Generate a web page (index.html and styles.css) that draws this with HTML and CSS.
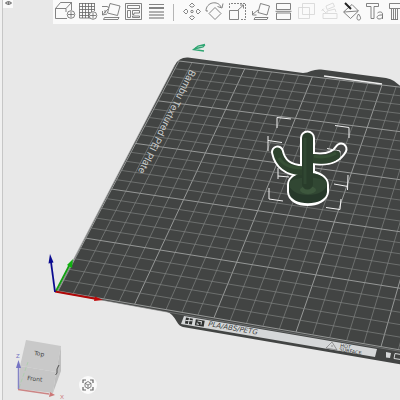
FILE: index.html
```html
<!DOCTYPE html>
<html lang="en">
<head>
    <meta charset="utf-8">
    <title>Prepare</title>
    <link rel="stylesheet" href="styles.css">
</head>
<body>
    <div class="app">
        <!-- edge of the settings panel -->
        <aside class="sidebar"></aside>

        <main class="viewport">
            <svg class="scene" viewBox="3 0 397 400" preserveAspectRatio="xMinYMin slice">
                <!-- build plate -->
                <path class="plate" d="M57 292 L175 65 Q179 57 188 57.500 L303 73 Q307 73 311 71 Q316 69 321 69.500 L386 78 Q391 79 394 81 L404 89 V365 L183 327 Q179 326 177 322 Q172 313 167 312 Z"/>
                <g id="grid"></g>
                <path class="plate-edge" d="M58 292 L167 312 L404 352 M57 291 L175 65"/>
                <path class="slot" d="M324 76 L382 84"/>

                <text class="plate-name" transform="translate(190 69) rotate(117)">Bambu Textured PEI Plate</text>

                <!-- plate label -->
                <path class="label" d="M184 316 L377 349 L375 357 L181 324 Z"/>
                <g transform="translate(186 317.500) rotate(10)">
                    <rect class="dark" width="7" height="6"/>
                    <path class="light-line" d="M3.500 0 V6 M0 3 L7 2"/>
                    <rect class="dark" x="10" y="0" width="9" height="6"/>
                    <path class="light-line" d="M12 1.500 H16 V4.500 M12 3 V4.500 H14"/>
                </g>
                <text class="label-text" transform="translate(208 326) rotate(10)">PLA/ABS/PETG</text>
                <path class="warning" d="M326 348 L332 342 L337 350 Z M332 345 V347"/>
                <text class="label-small" transform="translate(340 347) rotate(10)">HOT</text>
                <text class="label-small" transform="translate(339 351) rotate(10)">SURFACE</text>
                <path class="bin" d="M386 352 L391 353 L390 358 L386 357.500 Z"/>
                <path class="bin-line" d="M404 355 L395 353.500 L394 358.500 L404 360"/>

                <path class="mark" d="M205 44.500 L198 46 L193.500 49.500 L204 51 M205 44.500 L203 47 L194 49"/>

                <!-- selection box -->
                <path class="corners" d="M291 119 L277 117.500 V128 M335 125.500 L349 127.500 V138 M268 136 V151 M268 140.500 L282 142.500 M278 168 V179 M278 176 L289 177 M269 188 V199 L283 201 M326 207.500 L340 209.500 L341 199 M334 184 L348 186.500 M348 175 L347.500 190"/>

                <!-- cactus -->
                <g class="outline">
                    <path d="M277.500 152 C280 164 288 170 303 171 M313 158.500 C326 160 336 158 341 149"/>
                    <path class="trunk" d="M307.500 138 V187"/>
                    <path class="pot" d="M289 185 C290 168 326 168 327 185 V192 C325 208 290 208 289 192 Z"/>
                </g>
                <path class="arm-gap" d="M313 158.500 C326 160 336 158 341 149"/>
                <path class="corners" d="M327 148.500 L340 151 V160"/>
                <path class="pot-side" d="M289 184 V192 C290 207 326 207 327 192 V184 Z"/>
                <ellipse class="pot-top" cx="308" cy="184" rx="19" ry="11"/>
                <path class="pot-inner" d="M290 182 C292 170 324 170 326 182 C322 176 294 176 290 182 Z"/>
                <ellipse class="pot-shine" cx="308" cy="190" rx="8" ry="4"/>
                <path class="arm" d="M277.500 152 C280 164 288 170 303 171"/>
                <path class="arm" d="M313 158.500 C322 160 331 159 336 155"/>
                <path class="arm-light" d="M279 158 C283 165 290 168 302 168 M314 156 C323 158 331 156 336 153"/>
                <path class="trunk-fill" d="M307.500 138 V184"/>
                <path class="trunk-light" d="M305 138 V184"/>

                <!-- origin axes -->
                <path class="axis-y" d="M56 291 L70 264"/>
                <path class="head-y" d="M73 259 L72 268 L67 265 Z"/>
                <path class="axis-x" d="M55 291.500 L97 299"/>
                <path class="head-x" d="M103 300 L94 301 L95 296.500 Z"/>
                <path class="axis-z" d="M55 292 L51 262"/>
                <path class="head-z" d="M50 254 L53.500 262.500 L48.500 263.500 Z"/>

                <!-- view cube -->
                <path class="cube-top" d="M26 340 L61 346 L56 372 L20 366 Z"/>
                <path class="cube-front" d="M20 366 L56 372 L53 393 L19 389 Z"/>
                <path class="cube-side" d="M61 346 V371 L53 393 L56 372 Z"/>
                <text class="cube-text" transform="translate(34 355) rotate(8)">Top</text>
                <text class="cube-text" transform="translate(27 380) rotate(7)">Front</text>
                <path class="cube-mark" d="M59 365 L57 369 V373 L55.500 375"/>
                <path class="nav-y" d="M19 388 L28 362"/>
                <path class="nav-z" d="M18.500 389 V367"/>
                <path class="nav-z-head" d="M18.500 360 L21 368 H16 Z"/>
                <path class="nav-x" d="M18 389.500 L49 394"/>
                <path class="nav-x-head" d="M55 395 L49 397 L50 392 Z"/>
                <text class="nav-text nav-text-z" x="16" y="358">Z</text>
                <text class="nav-text nav-text-x" x="60" y="399">X</text>
            </svg>

            <div class="top">
                <button class="collapse" aria-label="Collapse sidebar">
                    <svg viewBox="0 0 10 8"><ellipse cx="5.500" cy="3" rx="2.500" ry="1.500"/><path d="M2 3 H9 M5.500 1.500 V5"/></svg>
                </button>
                <nav class="toolbar">
                    <button class="tool" aria-label="Add">
                        <svg viewBox="0 0 23 24"><path d="M2.500 8.500 H13 V12 M2.500 8.500 V18.500 H14 M2.500 8.500 L7.500 2.500 H18.500 V10 M13 8.500 L18.500 2.500"/><circle cx="18" cy="14.500" r="3.800"/><path d="M18 11.500 V17.500 M15 14.500 H21"/></svg>
                    </button>
                    <button class="tool" aria-label="Add plate">
                        <svg viewBox="0 0 23 24"><path d="M3.500 3 V18 M6.500 3 V18 M9.500 3 V18 M12.500 3 V18 M15.500 3 V12 M18.500 3 V11 M3.500 3.500 H18.500 M3.500 6.500 H18.500 M3.500 9.500 H18.500 M3.500 12.500 H14 M3.500 15.500 H13 M3.500 18 H14"/><circle cx="17" cy="15.500" r="3.800"/><path d="M17 12.500 V18.500 M14 15.500 H20"/></svg>
                    </button>
                    <button class="tool" aria-label="Auto orient">
                        <svg viewBox="0 0 23 24"><path d="M11 3.500 L21 6 L18.500 15.500 L8.500 13 Z M3 6.500 H8 L10 7.500 M9 9 L4 14.500 M3.500 11 V15 L8 14 M6 10 V13 M5.500 17.500 H20 L19 19.500 H4.500 Z"/></svg>
                    </button>
                    <button class="tool" aria-label="Arrange all objects">
                        <svg viewBox="0 0 23 24"><path d="M3.500 3.500 H19.500 V19.500 H3.500 Z M5.500 5.500 H17.500 V8.500 H5.500 Z M5.500 10.500 H8.500 V17.500 H5.500 Z M10.500 10.500 H17.500 V13 H12 V14.500 H10.500 Z M10.500 16 H17.500 V17.500 H10.500 Z"/></svg>
                    </button>
                    <button class="tool" aria-label="Variable layer height">
                        <svg viewBox="0 0 23 24"><path d="M4 4.500 H19 M4 7.500 H19 M4 8.500 H19"/><path class="thick" d="M4 12 H19 M4 15 H19 M4 18 H19"/></svg>
                    </button>
                    <span class="separator"></span>
                    <button class="tool" aria-label="Move">
                        <svg viewBox="0 0 23 24"><path d="M12 3 L14.500 5.500 L13 7 H11 L9.500 5.500 Z M12 20 L14.500 17.500 L13 16 H11 L9.500 17.500 Z M3.500 11.500 L6 9 L7.500 10.500 V12.500 L6 14 Z M20.500 11.500 L18 9 L16.500 10.500 V12.500 L18 14 Z"/><circle cx="12" cy="11.500" r="1.200"/></svg>
                    </button>
                    <button class="tool" aria-label="Rotate">
                        <svg viewBox="0 0 23 24"><path d="M12 7.500 L18 13.500 L12 19.500 L6 13.500 Z M3 11 C3 2 15 0 18 7 M20 3.500 L19 8 L14.500 6.500 M3 11 L5 11"/></svg>
                    </button>
                    <button class="tool" aria-label="Scale">
                        <svg viewBox="0 0 23 24"><path d="M3.500 10.500 H12.500 V19.500 H3.500 Z M12 10 L17 5.500 M14 5 H17.500 V8.500"/><path class="dashed" d="M3.500 8 V3.500 H19.500 V19.500 H15"/></svg>
                    </button>
                    <button class="tool" aria-label="Lay on face">
                        <svg viewBox="0 0 23 24"><path d="M11.500 3.500 L20.500 6 L18 15 L9 12.500 Z M9 10 L4 14 M3.500 11 V15 L7.500 15 M6 17.500 H19 L18 19.500 H5 Z"/></svg>
                    </button>
                    <button class="tool" aria-label="Cut">
                        <svg viewBox="0 0 23 24"><path d="M4.500 3.500 H18.500 V9.500 H4.500 Z M4.500 13 H18.500 V19.500 H4.500 Z M3.500 11.300 H19.500"/></svg>
                    </button>
                    <button class="tool" aria-label="Mesh boolean" disabled>
                        <svg viewBox="0 0 23 24"><path d="M7.500 3.500 H19.500 V14.500 H7.500 Z M3.500 7.500 H14.500 V18.500 H3.500 Z"/></svg>
                    </button>
                    <button class="tool" aria-label="Assemble" disabled>
                        <svg viewBox="0 0 23 24"><path d="M8 6 L15 3 L16.500 6.500 L9 9.500 Z M4 9 L8 13 M3.500 11 L6 8.500 M5 13.500 H19 V18.500 H5 Z M9 13 V11 L17 9 L18 12"/></svg>
                    </button>
                    <button class="tool" aria-label="Color painting">
                        <svg viewBox="0 0 23 24"><path d="M2.500 12 L11 4.500 L17.500 11 L9.500 18.500 Z M3 12 L17 11 M17.500 14 C15.500 17 15.500 20 17.500 20 C20.500 20 20 17 17.500 14 Z"/><path class="bold" d="M4 3 L10 9"/></svg>
                    </button>
                    <button class="tool" aria-label="Text">
                        <svg viewBox="0 0 23 24"><path d="M2.500 3.500 H14.500 V6.500 H10 V18.500 H7 V6.500 H2.500 Z M13.500 13 C15 11.500 18.500 11.500 18.500 14 V19 M18.500 15 C12 14.500 12 19 15 19 C17 19 18.500 18 18.500 16.500"/></svg>
                    </button>
                    <button class="tool" aria-label="Support painting">
                        <svg viewBox="0 0 23 24"><path d="M2.500 3.500 H20 V8.500 H2.500 Z M4.500 9 V19.500 M6.500 9 V19.500 M8.500 9 V19.500 M10.500 9 V19.500 M4 19.500 H11"/></svg>
                    </button>
                </nav>
            </div>

            <button class="fit" aria-label="Fit camera to scene">
                <svg viewBox="0 0 18 18"><path class="thick" d="M4 7 V4 H7 M11 4 H14 V7 M14 11 V14 H11 M7 14 H4 V11"/><path d="M9 5.500 L12 7.300 V10.700 L9 12.500 L6 10.700 V7.300 Z M6 7.300 L9 9 L12 7.300 M9 9 V12.500"/></svg>
            </button>
        </main>
    </div>

    <script src="grid.js"></script>
</body>
</html>
```
FILE: styles.css
```css
body {
    margin: 0;
    background-color: #e8e8e8;
    font-family: "Liberation Sans", Arial, sans-serif;
}
button {
    padding: 0;
    border: none;
    background: none;
    cursor: pointer;
}
.app {
    display: grid;
    grid-template-columns: 3px 1fr;
    height: 100vh;
    overflow: hidden;
}
.sidebar {
    border-right: 1px solid #c6c6c6;
    background-color: #f0f0f0;
}
.viewport {
    position: relative;
    display: flex;
    flex-direction: column;
    justify-content: space-between;
    align-items: flex-start;
    min-width: 0;
    overflow: hidden;
}
.scene {
    position: absolute;
    top: 0;
    left: 0;
    width: 100%;
    height: 100%;
}

/* toolbar */
.top {
    position: relative;
    display: flex;
    align-items: flex-start;
    gap: 40px;
    width: 100%;
    overflow: hidden;
}
.collapse {
    flex: none;
    width: 10px;
    height: 8px;
    background-color: #fafafa;
}
.toolbar {
    display: flex;
    flex: 1;
    align-items: center;
    min-width: 0;
    height: 24px;
    overflow: hidden;
    background-color: #fafafa;
}
.tool {
    flex: none;
    width: 23px;
    height: 24px;
}
.top svg, .fit svg {
    display: block;
    width: 100%;
    height: 100%;
    fill: none;
    stroke: #666;
    stroke-width: 0.8;
}
.tool:disabled svg {
    stroke: #d4d4d4;
}
.top .thick, .fit .thick {
    stroke-width: 1.2;
}
.top .bold {
    stroke: #222;
    stroke-width: 2;
}
.top .dashed {
    stroke-dasharray: 2 1;
}
.separator {
    flex: none;
    width: 1px;
    height: 17px;
    margin: 0 6px 0 5px;
    background-color: #b5b5b5;
}
.fit {
    position: relative;
    width: 18px;
    height: 18px;
    margin: 0 0 6px 76px;
    border-radius: 50%;
    background-color: #fafafa;
}

/* build plate */
.plate { fill: #424443; }
.grid-line { stroke: #808281; stroke-width: 0.7; }
.grid-line.major { stroke: #969897; stroke-width: 1; }
.plate-edge { fill: none; stroke: #858786; stroke-width: 0.6; }
.slot { stroke: #eee; stroke-width: 1.5; }
.plate-name { fill: #c8cac9; font-family: Roboto, sans-serif; font-size: 10px; }
.label { fill: #d5d7d8; }
.label-text, .label-small { fill: #3c3e3d; font-family: "DejaVu Sans", sans-serif; }
.label-text { font-size: 7px; font-style: italic; }
.label-small { font-size: 5px; }
.dark { fill: #2f3130; }
.light-line { fill: none; stroke: #d5d7d8; stroke-width: 1; }
.warning { fill: none; stroke: #777; stroke-width: 0.7; }
.bin { fill: #d5d7d8; }
.bin-line { fill: none; stroke: #d5d7d8; stroke-width: 1; }
.mark { fill: none; stroke: #2fa572; stroke-width: 1.3; }

/* model */
.corners { fill: none; stroke: #f2f2f2; stroke-width: 1; }
.outline { fill: none; stroke: #fff; stroke-width: 13; stroke-linecap: round; }
.outline .trunk { stroke-width: 15; }
.outline .pot { stroke-width: 4; }
.pot-side { fill: #26382a; }
.pot-top { fill: #314733; }
.pot-inner { fill: #2a3d2c; }
.pot-shine { fill: #3d573d; }
.arm { fill: none; stroke: #2d422d; stroke-width: 9; stroke-linecap: round; }
.arm-gap { fill: none; stroke: #454746; stroke-width: 9; stroke-linecap: round; }
.arm-light { fill: none; stroke: #354f34; stroke-width: 3; }
.trunk-fill { stroke: #293d2b; stroke-width: 11; stroke-linecap: round; }
.trunk-light { stroke: #304732; stroke-width: 3; }

/* axes */
.axis-x, .axis-y, .axis-z { stroke-width: 1.8; }
.axis-x { stroke: #b00808; }
.axis-y { stroke: #12a012; }
.axis-z { stroke: #0a0a90; }
.head-x { fill: #c00808; }
.head-y { fill: #12b012; }
.head-z { fill: #0a0a90; }

/* view cube */
.cube-top { fill: #c9c9c9; }
.cube-front { fill: #c6c6c6; }
.cube-side { fill: #bfbfbf; }
.cube-text { fill: #444; font-family: "DejaVu Sans", sans-serif; font-size: 6px; }
.cube-mark { fill: none; stroke: #555; stroke-width: 1; }
.nav-x { stroke: #cc8585; stroke-width: 1.5; }
.nav-y { stroke: #a9cfa9; stroke-width: 0.8; stroke-dasharray: 4 2; }
.nav-z { stroke: #8584c6; stroke-width: 1.5; }
.nav-x-head { fill: #cc7777; }
.nav-z-head { fill: #7675c4; }
.nav-text { font-size: 6px; }
.nav-text-x { fill: #cc7777; }
.nav-text-z { fill: #7675c4; }
```
FILE: grid.js
```js
// corners of a 15 x 25 block of cells on screen
const p0 = [58, 291];
const p1 = [296, 332];
const p2 = [382, 85];
const p3 = [179, 61];
const cols = 15;
const rows = 25;

// perspective mapping of the unit square to the four corners
const sx = p0[0] - p1[0] + p2[0] - p3[0];
const sy = p0[1] - p1[1] + p2[1] - p3[1];
const dx1 = p1[0] - p2[0], dx2 = p3[0] - p2[0];
const dy1 = p1[1] - p2[1], dy2 = p3[1] - p2[1];
const det = dx1 * dy2 - dx2 * dy1;
const g = (sx * dy2 - dx2 * sy) / det;
const h = (dx1 * sy - sx * dy1) / det;

function project(col, row) {
    const u = col / cols;
    const v = row / rows;
    const w = g * u + h * v + 1;
    const x = (p1[0] - p0[0] + g * p1[0]) * u + (p3[0] - p0[0] + h * p3[0]) * v + p0[0];
    const y = (p1[1] - p0[1] + g * p1[1]) * u + (p3[1] - p0[1] + h * p3[1]) * v + p0[1];
    return [x / w, y / w];
}

function drawLine(a, b, major) {
    const line = document.createElementNS('http://www.w3.org/2000/svg', 'line');
    line.setAttribute('x1', a[0]);
    line.setAttribute('y1', a[1]);
    line.setAttribute('x2', b[0]);
    line.setAttribute('y2', b[1]);
    line.setAttribute('class', major ? 'grid-line major' : 'grid-line');
    document.getElementById('grid').appendChild(line);
}

for (let col = 0; col <= 25; col++) {
    drawLine(project(col, 0), project(col, rows), col % 5 === 0);
}
for (let row = 0; row <= rows; row++) {
    drawLine(project(0, row), project(25, row), row % 5 === 0);
}
```
